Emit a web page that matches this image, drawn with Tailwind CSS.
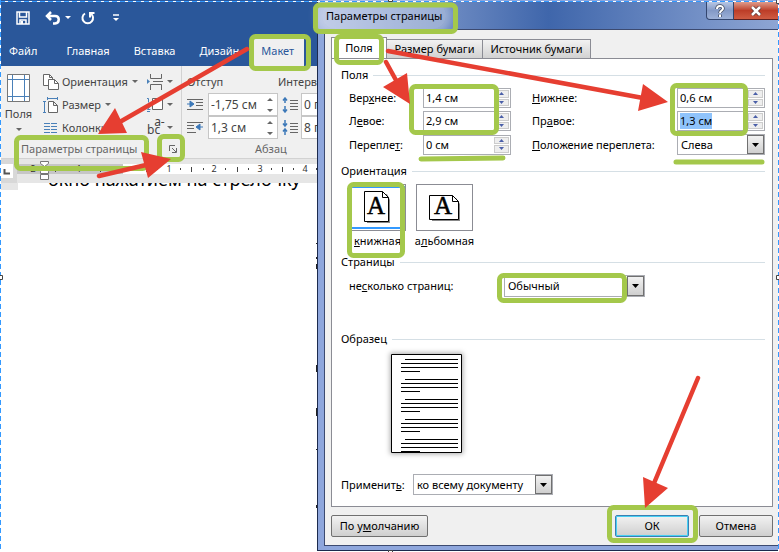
<!DOCTYPE html>
<html lang="ru">
<head>
    <meta charset="UTF-8">
    <meta name="viewport" content="width=device-width, initial-scale=1.0">
    <title>Параметры страницы</title>
    <script src="https://cdn.jsdelivr.net/npm/@tailwindcss/browser@4"></script>
</head>
<body class="relative flex min-h-screen overflow-hidden bg-white font-['Noto_Sans','Open_Sans',sans-serif] text-[11px] leading-4 text-black">

    <!-- Word window -->
    <main class="w-[317px] shrink-0 overflow-hidden">
        <header class="bg-[#2a579a] text-white">
            <div class="flex h-9 items-center pl-4">
                <button aria-label="Сохранить" class="mr-[15px]">
                    <svg width="14" height="14" viewBox="0 0 14 14" fill="none" stroke="#fff" stroke-width="1.5"><path d="M1 1h12v12H1z"/><path d="M3.5 1v5h7V1M4 13V9h6v4"/><path d="M6 10v3" stroke-width="2"/></svg>
                </button>
                <button aria-label="Отменить" class="mr-1">
                    <svg width="16" height="14" viewBox="0 0 16 14" fill="none" stroke="#fff" stroke-width="2.5"><path d="M6 1L2 5l4 4M2 5h8c5 0 5 7 0 7.500H8"/></svg>
                </button>
                <svg width="6" height="4" class="mr-2.5"><path d="M0 0h6L3 3z" fill="#fff"/></svg>
                <button aria-label="Повторить" class="mr-[18px]">
                    <svg width="14" height="14" viewBox="0 0 14 14" fill="none" stroke="#fff" stroke-width="2"><path d="M9.500 2.500A5.300 5.300 0 1 1 4 2.500M9 6.500V2h4.500"/></svg>
                </button>
                <svg width="6" height="8"><path d="M0 1h6" stroke="#fff" stroke-width="1.500"/><path d="M0 4h6L3 7z" fill="#fff"/></svg>
            </div>
            <nav class="flex h-[30px] items-stretch">
                <a href="#" class="mr-[17px] flex items-center pl-[9px]">Файл</a>
                <a href="#" class="flex items-center px-3">Главная</a>
                <a href="#" class="flex items-center px-3">Вставка</a>
                <a href="#" class="flex items-center px-3">Дизайн</a>
                <a href="#" class="flex items-center bg-[#f0f0f0] px-2.5 text-[#2a579a]">Макет</a>
            </nav>
        </header>

        <section class="flex h-[93px] border-b border-[#d2d2d2] bg-[#f0f0f0] text-[#444]">
            <div class="flex w-[182px] shrink-0 flex-col border-r border-[#d2d2d2]">
                <div class="flex pt-1">
                    <button class="flex w-[43px] shrink-0 flex-col items-center pt-1 pr-1.5">
                        <svg width="23" height="28" fill="none"><path d="M.5.5h22v27H.5z" fill="#fff" stroke="#777"/><path d="M5.500 1v26M17.500 1v26M1 5.500h21M1 22.500h21" stroke="#4a80b8"/></svg>
                        <span class="mt-1 leading-4">Поля</span>
                        <svg width="6" height="4" class="mt-1.5"><path d="M0 0h6L3 3z" fill="#666"/></svg>
                    </button>
                    <div class="w-[104px] shrink-0">
                        <button class="flex h-[23px] items-center">
                            <svg width="16" height="16" class="mr-[3px]" fill="#fff" stroke="#666"><path d="M.5.5h6l3 3v8h-9z"/><path d="M5.500 5.500h6l4 4v6h-10z"/><path d="M11.500 5.500v4h4M6.500.5v3h3" fill="none"/></svg>
                            Ориентация
                            <svg width="6" height="4" class="ml-1"><path d="M0 0h6L3 3z" fill="#666"/></svg>
                        </button>
                        <button class="flex h-[23px] items-center">
                            <svg width="16" height="16" class="mr-[3px]" fill="none" stroke="#4a80b8"><path d="M4.500 1.500h10M4.500 0v3M14.500 0v3M1.500 4.500v11M0 4.500h3M0 15.500h3"/><path d="M5.500 4.500h5l4 4v7h-9zM10.500 4.500v4h4" fill="#fff" stroke="#666"/></svg>
                            Размер
                            <svg width="6" height="4" class="ml-1"><path d="M0 0h6L3 3z" fill="#666"/></svg>
                        </button>
                        <button class="flex h-[23px] items-center">
                            <svg width="16" height="12" class="mr-[3px]" stroke="#4a80b8"><path d="M1 1.500h6M1 4.500h6M1 7.500h6M1 10.500h6M8 1.500h6M8 4.500h6M8 7.500h6M8 10.500h6"/></svg>
                            Колонки
                        </button>
                    </div>
                    <div>
                        <button aria-label="Разрывы" class="flex h-[23px] items-center">
                            <svg width="16" height="16" class="mr-1" fill="none" stroke="#666"><path d="M3.500 0v4.500h11V0M3.500 16v-5.500h11V16M6 7.500h10"/><path d="M0 5l3 2.500L0 10z" fill="#4a80b8" stroke="none"/></svg>
                            <svg width="6" height="4"><path d="M0 0h6L3 3z" fill="#666"/></svg>
                        </button>
                        <button aria-label="Номера строк" class="flex h-[23px] items-center">
                            <svg width="16" height="16" class="mr-1" fill="none" stroke="#4a80b8"><path d="M0 1.500h1.500v4M0 8.500h2.500v1.500L.5 12.500h3M0 14.500h3"/><path d="M5.500 1.500h10v11h-10z" fill="#fff" stroke="#666"/></svg>
                            <svg width="6" height="4"><path d="M0 0h6L3 3z" fill="#666"/></svg>
                        </button>
                        <button aria-label="Расстановка переносов" class="flex h-[23px] items-center">
                            <span class="mr-1 flex w-4 text-xs leading-3"><span class="pt-1">bc</span><span class="-ml-1.5 -mt-1">a-</span></span>
                            <svg width="6" height="4"><path d="M0 0h6L3 3z" fill="#666"/></svg>
                        </button>
                    </div>
                </div>
                <div class="flex h-5 items-center pl-[21px] text-[#666]">
                    <span class="whitespace-nowrap">Параметры страницы</span>
                    <button aria-label="Открыть параметры страницы" class="ml-auto mr-1">
                        <svg width="8" height="8" fill="none" stroke="#666"><path d="M.5 6V.5H6M3 3l4 4M7.500 3v4.500H3"/></svg>
                    </button>
                </div>
            </div>

            <div class="shrink-0 pt-1 pl-[5px]">
                <div class="grid grid-cols-[21px_70px_23px_70px] items-center">
                    <span class="col-span-2 flex h-[23px] items-center">Отступ</span>
                    <span class="col-span-2 flex h-[23px] items-center">Интервал</span>

                    <svg width="16" height="13" stroke="#666"><path d="M0 1.500h16M9 4.500h7M9 7.500h7M0 11.500h16"/><path d="M0 6h4M3 3l4 3-4 3z" stroke="#3c78b8" fill="#3c78b8"/></svg>
                    <label class="flex h-[23px] items-center border border-[#c6c6c6] bg-white pr-1">
                        <input aria-label="Отступ слева" value="-1,75 см" class="w-0 flex-1 pl-0.5 text-xs outline-none">
                        <svg width="6" height="14" fill="#666"><path d="M0 3h6L3 0zM0 11h6l-3 3z"/></svg>
                    </label>
                    <svg width="16" height="16" class="justify-self-center" fill="none" stroke="#666"><path d="M8 3.500h8M8 6.500h8M8 9.500h8M8 12.500h8"/><path d="M3 1v5M1 3.500L3 1l2 2.500M3 9v6M1 12.500L3 15l2-2.500" stroke="#3c78b8" stroke-width="1.500"/></svg>
                    <label class="flex h-[23px] items-center border border-[#c6c6c6] bg-white">
                        <input aria-label="Интервал перед" value="0 пт" class="w-0 flex-1 pl-0.5 text-xs outline-none">
                    </label>

                    <svg width="16" height="13" stroke="#666"><path d="M0 1.500h16M0 4.500h7M0 7.500h7M0 11.500h9"/><path d="M12 6h4M13 3L9 6l4 3z" stroke="#3c78b8" fill="#3c78b8"/></svg>
                    <label class="flex h-[23px] items-center border border-[#c6c6c6] bg-white pr-1">
                        <input aria-label="Отступ справа" value="1,3 см" class="w-0 flex-1 pl-0.5 text-xs outline-none">
                        <svg width="6" height="14" fill="#666"><path d="M0 3h6L3 0zM0 11h6l-3 3z"/></svg>
                    </label>
                    <svg width="16" height="16" class="justify-self-center" fill="none" stroke="#666"><path d="M8 3.500h8M8 6.500h8M8 9.500h8M8 12.500h8"/><path d="M3 0v6M1 3.500L3 6l2-2.500M3 9v6M1 11.500L3 9l2 2.500" stroke="#3c78b8" stroke-width="1.500"/></svg>
                    <label class="flex h-[23px] items-center border border-[#c6c6c6] bg-white">
                        <input aria-label="Интервал после" value="8 пт" class="w-0 flex-1 pl-0.5 text-xs outline-none">
                    </label>
                </div>
                <p class="flex h-5 items-center pl-[68px] text-[#666]">Абзац</p>
            </div>
        </section>

        <!-- ruler -->
        <div class="flex h-6 bg-[#e6e6e6]">
            <div class="flex w-[17px] shrink-0 items-center bg-[#d8d8d8] pl-px">
                <svg width="12" height="14"><path d="M0 0h12v14H0z" fill="#fff"/><path d="M3.500 5v4.500H9" fill="none" stroke="#555" stroke-width="2"/></svg>
            </div>
            <svg width="300" height="24" class="shrink-0 font-['Noto_Sans',sans-serif] text-[9px]" fill="#333" text-anchor="middle">
                <path d="M0 5h106v10H0z" fill="#c6c6c6"/>
                <path d="M106 5h194v10H106z" fill="#fff"/>
                <text x="16" y="13">2</text><text x="62" y="13">1</text><text x="152" y="13">1</text><text x="197" y="13">2</text><text x="243" y="13">3</text><text x="288" y="13">4</text>
                <path d="M38.500 8v5M83.500 8v5M129.500 8v5M174.500 8v5M220.500 8v5M265.500 8v5" stroke="#444"/>
                <path d="M50 10h1M73 10h1M95 10h1M118 10h1M140 10h1M163 10h1M186 10h1M208 10h1M231 10h1M254 10h1M276 10h1M299 10h1" stroke="#444" stroke-width="2"/>
                <path d="M23.500 2.500h8v2l-4 3-4-3zM23.500 14.500v-2l4-4 4 4v2zM23.500 15.500h8v5h-8z" fill="#fff" stroke="#777"/>
            </svg>
        </div>

        <!-- document -->
        <div class="flex">
            <div class="h-[7px] w-[18px] shrink-0 bg-[#e6e6e6]"></div>
            <div class="flex h-2 items-end overflow-hidden pl-[30px]">
                <p class="whitespace-nowrap text-lg leading-6">окно нажатием на стрелочку</p>
            </div>
        </div>
    </main>

    <!-- Page setup dialog -->
    <div role="dialog" aria-label="Параметры страницы" class="flex min-w-0 flex-1 flex-col self-start border-l border-[#1c2a4d] bg-[#8ea6dc] pt-0.5">
        <header class="flex h-[27px] items-start bg-linear-to-r from-[#a9b9de] via-[#3f66ab] via-50% to-[#8fa6d4]">
            <h1 class="ml-1 rounded-full bg-white/30 px-1 leading-[27px] shadow-[0_0_8px_6px] shadow-white/30">Параметры страницы</h1>
            <button aria-label="Справка" class="ml-auto flex h-[18px] w-7 items-center justify-center rounded-bl border border-t-0 border-[#33466f] bg-linear-to-b from-[#b9c7e4] via-[#8399c6] to-[#9db1d8]">
                <svg width="12" height="14" fill="none"><path d="M3 5c0-4 6-4 6-.5 0 2-3 2-3 4.500M6 10.500V13" stroke="#444c60" stroke-width="3.500"/><path d="M3 5c0-4 6-4 6-.5 0 2-3 2-3 4.500M6 10.500V13" stroke="#fff" stroke-width="2"/></svg>
            </button>
            <button aria-label="Закрыть" class="flex h-[18px] w-[45px] items-center justify-center border border-t-0 border-l-0 border-[#5e2020] bg-linear-to-b from-[#dd9c8e] via-[#bd3d28] to-[#cf5b42]">
                <svg width="12" height="10"><path d="M2 1l8 8M10 1L2 9" stroke="#5a3030" stroke-width="4"/><path d="M2 1l8 8M10 1L2 9" stroke="#fff" stroke-width="2.500"/></svg>
            </button>
        </header>

        <div class="ml-[6px] border-y border-l border-[#3c4a70] bg-[#f0f0f0] pt-[7px] pr-[6px] pb-2 pl-[6px]">
            <div role="tablist" class="flex items-end">
                <button role="tab" aria-selected="true" class="h-[21px] w-14 border border-b-0 border-[#8b8c94] bg-white">Поля</button>
                <button role="tab" class="h-[19px] w-24 whitespace-nowrap border border-b-0 border-l-0 border-[#8b8c94] bg-linear-to-b from-[#f2f2f2] to-[#d2d2d2]">Размер бумаги</button>
                <button role="tab" class="h-[19px] w-[108px] whitespace-nowrap border border-b-0 border-l-0 border-[#8b8c94] bg-linear-to-b from-[#f2f2f2] to-[#d2d2d2]">Источник бумаги</button>
            </div>

            <form class="border border-[#8b8c94] bg-white pt-2 pr-[7px] pb-[11px] pl-[9px]">
                <h2 class="flex h-4 items-center gap-[5px]">Поля<span class="h-px flex-1 bg-[#d5dfe5]"></span></h2>
                <div class="mt-[5px] grid grid-cols-[74px_88px_21px_1fr_88px] items-center gap-y-[3px] pl-2">
                    <label for="top">Вер<u>х</u>нее:</label>
                    <div class="flex h-5 border border-[#abadb3] p-px">
                        <input id="top" value="1,4 см" class="w-0 flex-1 pl-px outline-none">
                        <div class="flex w-[15px] flex-col gap-px">
                            <button type="button" aria-label="Больше" class="flex flex-1 items-center justify-center border border-[#ccc] bg-[#eee]"><svg width="5" height="3" fill="#4a5fa8"><path d="M0 3h5L2.500 0z"/></svg></button>
                            <button type="button" aria-label="Меньше" class="flex flex-1 items-center justify-center border border-[#ccc] bg-[#eee]"><svg width="5" height="3" fill="#4a5fa8"><path d="M0 0h5L2.500 3z"/></svg></button>
                        </div>
                    </div>
                    <label for="bottom" class="col-start-4"><u>Н</u>ижнее:</label>
                    <div class="flex h-5 border border-[#abadb3] p-px">
                        <input id="bottom" value="0,6 см" class="w-0 flex-1 pl-px outline-none">
                        <div class="flex w-[15px] flex-col gap-px">
                            <button type="button" aria-label="Больше" class="flex flex-1 items-center justify-center border border-[#ccc] bg-[#eee]"><svg width="5" height="3" fill="#4a5fa8"><path d="M0 3h5L2.500 0z"/></svg></button>
                            <button type="button" aria-label="Меньше" class="flex flex-1 items-center justify-center border border-[#ccc] bg-[#eee]"><svg width="5" height="3" fill="#4a5fa8"><path d="M0 0h5L2.500 3z"/></svg></button>
                        </div>
                    </div>

                    <label for="left">Л<u>е</u>вое:</label>
                    <div class="flex h-5 border border-[#abadb3] p-px">
                        <input id="left" value="2,9 см" class="w-0 flex-1 pl-px outline-none">
                        <div class="flex w-[15px] flex-col gap-px">
                            <button type="button" aria-label="Больше" class="flex flex-1 items-center justify-center border border-[#ccc] bg-[#eee]"><svg width="5" height="3" fill="#4a5fa8"><path d="M0 3h5L2.500 0z"/></svg></button>
                            <button type="button" aria-label="Меньше" class="flex flex-1 items-center justify-center border border-[#ccc] bg-[#eee]"><svg width="5" height="3" fill="#4a5fa8"><path d="M0 0h5L2.500 3z"/></svg></button>
                        </div>
                    </div>
                    <label for="right" class="col-start-4">Пр<u>а</u>вое:</label>
                    <div class="flex h-5 border border-[#abadb3] p-px">
                        <div class="flex-1 pl-px"><input id="right" value="1,3 см" class="h-4 w-8 bg-[#8fc3fb] outline-none"></div>
                        <div class="flex w-[15px] flex-col gap-px">
                            <button type="button" aria-label="Больше" class="flex flex-1 items-center justify-center border border-[#ccc] bg-[#eee]"><svg width="5" height="3" fill="#4a5fa8"><path d="M0 3h5L2.500 0z"/></svg></button>
                            <button type="button" aria-label="Меньше" class="flex flex-1 items-center justify-center border border-[#ccc] bg-[#eee]"><svg width="5" height="3" fill="#4a5fa8"><path d="M0 0h5L2.500 3z"/></svg></button>
                        </div>
                    </div>

                    <label for="gutter">Перепле<u>т</u>:</label>
                    <div class="flex h-5 border border-[#abadb3] p-px">
                        <input id="gutter" value="0 см" class="w-0 flex-1 pl-px outline-none">
                        <div class="flex w-[15px] flex-col gap-px">
                            <button type="button" aria-label="Больше" class="flex flex-1 items-center justify-center border border-[#ccc] bg-[#eee]"><svg width="5" height="3" fill="#4a5fa8"><path d="M0 3h5L2.500 0z"/></svg></button>
                            <button type="button" aria-label="Меньше" class="flex flex-1 items-center justify-center border border-[#ccc] bg-[#eee]"><svg width="5" height="3" fill="#4a5fa8"><path d="M0 0h5L2.500 3z"/></svg></button>
                        </div>
                    </div>
                    <label for="gutterpos" class="col-start-4 whitespace-nowrap"><u>П</u>оложение переплета:</label>
                    <div class="relative h-[21px] border border-[#abadb3]">
                        <select id="gutterpos" class="h-full w-full appearance-none pl-[3px] outline-none"><option>Слева</option><option>Сверху</option></select>
                        <span class="pointer-events-none absolute inset-y-0 right-0 flex w-[17px] items-center justify-center border border-[#707070] bg-linear-to-b from-[#f2f2f2] to-[#cfcfcf]"><svg width="7" height="4"><path d="M0 0h7L3.500 4z"/></svg></span>
                    </div>
                </div>

                <h2 class="mt-2 flex h-4 items-center gap-[5px]">Ориентация<span class="h-px flex-1 bg-[#d5dfe5]"></span></h2>
                <div class="mt-[5px] flex gap-2.5 pl-2">
                    <button type="button" class="w-[57px]">
                        <span class="flex h-[47px] items-center justify-center border border-[#8b8c94] pb-px">
                            <span class="flex h-[43px] w-full items-center justify-center border-2 border-[#3399ff]">
                                <svg width="27" height="32" class="font-['Liberation_Serif',serif] text-[25px]"><path d="M3 3h20l3 6v23H3z" fill="#888"/><path d="M.5.5h18l6 6v24H.5z" fill="#fff" stroke="#000"/><path d="M18.500.5v6h6" fill="none" stroke="#000"/><text x="12" y="23" text-anchor="middle" fill="#000" stroke="#000" stroke-width=".5">A</text></svg>
                            </span>
                        </span>
                        <span class="mt-0.5 flex h-4 items-center justify-center"><span><u>к</u>нижная</span></span>
                    </button>
                    <button type="button" class="w-[57px]">
                        <span class="flex h-[47px] items-center justify-center border border-[#8b8c94]">
                            <svg width="32" height="26" class="font-['Liberation_Serif',serif] text-[25px]"><path d="M3 3h24l4 6v17H3z" fill="#888"/><path d="M.5.5h23l6 6v18H.5z" fill="#fff" stroke="#000"/><path d="M23.500.5v6h6" fill="none" stroke="#000"/><text x="14" y="19" text-anchor="middle" fill="#000" stroke="#000" stroke-width=".5">A</text></svg>
                        </span>
                        <span class="mt-0.5 flex h-4 items-center justify-center"><span>а<u>л</u>ьбомная</span></span>
                    </button>
                </div>

                <h2 class="mt-[5px] flex h-4 items-center gap-[5px]">Страницы<span class="h-px flex-1 bg-[#d5dfe5]"></span></h2>
                <div class="mt-[5px] flex items-center pl-2">
                    <label for="pages" class="w-[155px]">не<u>с</u>колько страниц:</label>
                    <div class="relative h-[22px] w-[141px] border border-[#abadb3]">
                        <select id="pages" class="h-full w-full appearance-none pl-[3px] outline-none"><option>Обычный</option></select>
                        <span class="pointer-events-none absolute inset-y-0 right-0 flex w-[17px] items-center justify-center border border-[#707070] bg-linear-to-b from-[#f2f2f2] to-[#cfcfcf]"><svg width="7" height="4"><path d="M0 0h7L3.500 4z"/></svg></span>
                    </div>
                </div>

                <h2 class="mt-[34px] flex h-4 items-center gap-[5px]">Образец<span class="h-px flex-1 bg-[#d5dfe5]"></span></h2>
                <svg width="71" height="99" viewBox="0 0 71 99" class="mt-[7px] ml-[50px] shadow-[0_0_5px_1px_#aaa]" stroke="#000">
                    <path d="M.5.5h70v98H.5z" fill="#fff"/>
                    <path d="M14 5.500h53M10 9.500h57M10 13.500h57M10 17.500h19M14 25.500h53M10 29.500h57M10 33.500h57M10 37.500h19M14 45.500h53M10 49.500h57M10 53.500h57M10 57.500h19M14 65.500h53M10 69.500h57M10 73.500h57M10 77.500h19M14 85.500h53M10 89.500h57M10 93.500h57M10 97.500h19"/>
                </svg>

                <div class="mt-[21px] flex items-center">
                    <label for="apply" class="w-[72px]">Применит<u>ь</u>:</label>
                    <div class="relative h-[21px] w-[140px] border border-[#abadb3]">
                        <select id="apply" class="h-full w-full appearance-none pl-[3px] outline-none"><option>ко всему документу</option></select>
                        <span class="pointer-events-none absolute inset-y-0 right-0 flex w-[17px] items-center justify-center border border-[#707070] bg-linear-to-b from-[#f2f2f2] to-[#cfcfcf]"><svg width="7" height="4"><path d="M0 0h7L3.500 4z"/></svg></span>
                    </div>
                </div>
            </form>

            <div class="mt-2 flex gap-2.5">
                <button class="mr-auto h-[22px] w-[97px] whitespace-nowrap rounded-xs border border-[#707070] bg-linear-to-b from-[#f2f2f2] to-[#cfcfcf] leading-5">По у<u>м</u>олчанию</button>
                <button class="h-[22px] w-[74px] rounded-xs border border-[#3c7fb1] bg-linear-to-b from-[#f2f2f2] to-[#cfcfcf] leading-5 inset-ring inset-ring-[#48d0f4]">ОК</button>
                <button class="h-[22px] w-[74px] rounded-xs border border-[#707070] bg-linear-to-b from-[#f2f2f2] to-[#cfcfcf] leading-5">Отмена</button>
            </div>
        </div>
        <div class="h-[5px] border-b border-[#1c2a4d]"></div>
    </div>

    <!-- callouts -->
    <svg class="pointer-events-none absolute inset-0 h-full w-full" fill="none">
        <path d="M0 1.500h779M.5 0v552M778.500 0v552" stroke="#fff"/>
        <path d="M0 1.500h779M.5 0v552M778.500 0v552" stroke="#3399ff" stroke-dasharray="5 3"/>
        <path d="M-1.500 275.500h4v4h-4zM776.500 275.500h4v4h-4zM388.500 550.500h4v4h-4zM388.500-2.500h4v4h-4zM776.500-.5h4v4h-4z" fill="#fff" stroke="#444"/>
        <path d="M316.500 243v1M316.500 257v2M316.500 264v5M316.500 365v7M316.500 408v8M316.500 449v1M316.500 505v3" stroke="#222"/>
        <g stroke="#a4c84b" stroke-width="5">
            <rect x="315.500" y="5" width="140" height="26.500" rx="4"/>
            <rect x="251.500" y="36.500" width="57" height="32" rx="4"/>
            <rect x="16.500" y="137.500" width="130" height="31" rx="4"/>
            <rect x="159.500" y="136.500" width="23" height="23" rx="4"/>
            <rect x="336.500" y="36.500" width="45" height="26" rx="4"/>
            <rect x="411.500" y="86.500" width="85" height="46" rx="4"/>
            <rect x="672.500" y="85.500" width="73" height="48" rx="4"/>
            <rect x="349.500" y="184.500" width="53" height="71" rx="4"/>
            <rect x="499.500" y="275.500" width="125" height="25" rx="4"/>
            <rect x="609.500" y="507.500" width="86" height="33" rx="4"/>
            <path d="M421 159l82-1M676 162h86" stroke-linecap="round"/>
        </g>
        <g stroke="#e63e31" stroke-width="4.500" stroke-linecap="round">
            <path d="M247 49L118 123M99 176l47-11M386 62l11 20M388 51l255 47M698 378l-46 110"/>
            <path d="M98 134l17-26 12 25zM171 159l-30-7 7 26zM410 104l-27-17 24-14zM668 102l-25-18-5 27zM645 508l-2-31 25 11z" fill="#e63e31" stroke="none"/>
        </g>
    </svg>
</body>
</html>
